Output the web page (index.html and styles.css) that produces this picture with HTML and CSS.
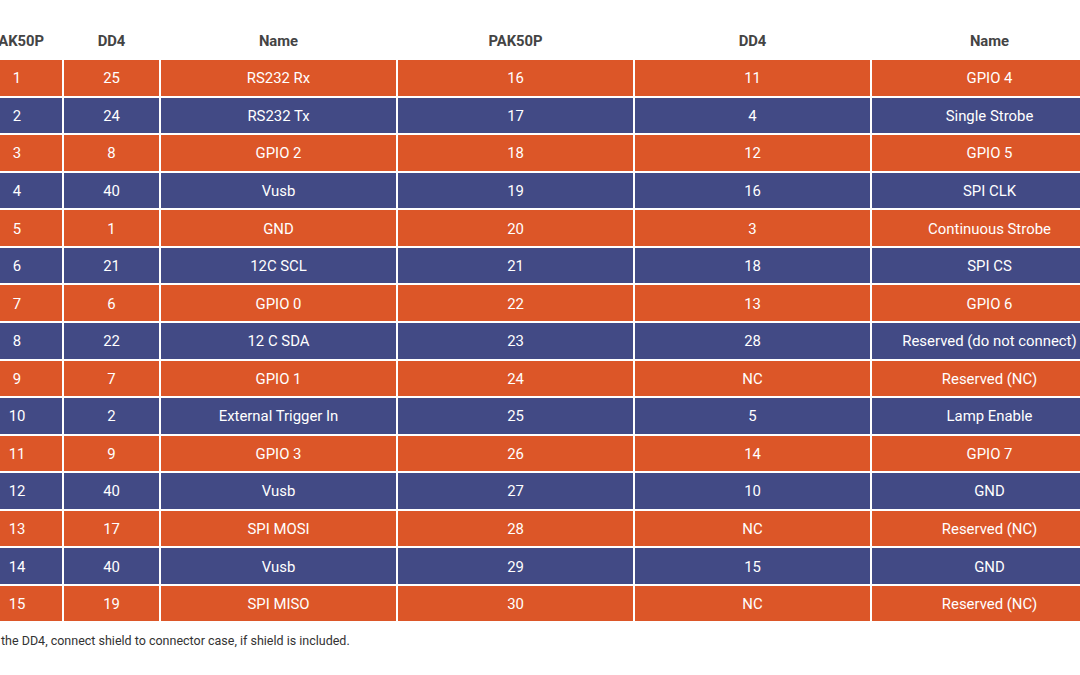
FILE: index.html
```html
<!DOCTYPE html>
<html>
<head>
<meta charset="utf-8">
<link rel="stylesheet" href="styles.css">
</head>
<body>
<div class="page">
  <div class="pins">
    <div class="hd">PAK50P</div><div class="hd">DD4</div><div class="hd">Name</div><div class="hd">PAK50P</div><div class="hd">DD4</div><div class="hd">Name</div>

    <div class="c o">1</div><div class="c o">25</div><div class="c o">RS232 Rx</div><div class="c o">16</div><div class="c o">11</div><div class="c o">GPIO 4</div>
    <div class="c b">2</div><div class="c b">24</div><div class="c b">RS232 Tx</div><div class="c b">17</div><div class="c b">4</div><div class="c b">Single Strobe</div>
    <div class="c o">3</div><div class="c o">8</div><div class="c o">GPIO 2</div><div class="c o">18</div><div class="c o">12</div><div class="c o">GPIO 5</div>
    <div class="c b">4</div><div class="c b">40</div><div class="c b">Vusb</div><div class="c b">19</div><div class="c b">16</div><div class="c b">SPI CLK</div>
    <div class="c o">5</div><div class="c o">1</div><div class="c o">GND</div><div class="c o">20</div><div class="c o">3</div><div class="c o">Continuous Strobe</div>
    <div class="c b">6</div><div class="c b">21</div><div class="c b">12C SCL</div><div class="c b">21</div><div class="c b">18</div><div class="c b">SPI CS</div>
    <div class="c o">7</div><div class="c o">6</div><div class="c o">GPIO 0</div><div class="c o">22</div><div class="c o">13</div><div class="c o">GPIO 6</div>
    <div class="c b">8</div><div class="c b">22</div><div class="c b">12 C SDA</div><div class="c b">23</div><div class="c b">28</div><div class="c b">Reserved (do not connect)</div>
    <div class="c o">9</div><div class="c o">7</div><div class="c o">GPIO 1</div><div class="c o">24</div><div class="c o">NC</div><div class="c o">Reserved (NC)</div>
    <div class="c b">10</div><div class="c b">2</div><div class="c b">External Trigger In</div><div class="c b">25</div><div class="c b">5</div><div class="c b">Lamp Enable</div>
    <div class="c o">11</div><div class="c o">9</div><div class="c o">GPIO 3</div><div class="c o">26</div><div class="c o">14</div><div class="c o">GPIO 7</div>
    <div class="c b">12</div><div class="c b">40</div><div class="c b">Vusb</div><div class="c b">27</div><div class="c b">10</div><div class="c b">GND</div>
    <div class="c o">13</div><div class="c o">17</div><div class="c o">SPI MOSI</div><div class="c o">28</div><div class="c o">NC</div><div class="c o">Reserved (NC)</div>
    <div class="c b">14</div><div class="c b">40</div><div class="c b">Vusb</div><div class="c b">29</div><div class="c b">15</div><div class="c b">GND</div>
    <div class="c o">15</div><div class="c o">19</div><div class="c o">SPI MISO</div><div class="c o">30</div><div class="c o">NC</div><div class="c o">Reserved (NC)</div>
  </div>
  <p class="note">the DD4, connect shield to connector case, if shield is included.</p>
</div>
</body>
</html>
```

FILE: styles.css
```css
html, body {
  margin: 0;
  padding: 0;
  background: #ffffff;
  overflow: hidden;
}
body {
  width: 1080px;
  height: 675px;
  font-family: Roboto, "Liberation Sans", sans-serif;
}
.page {
  padding-top: 23px;
}
.pins {
  display: grid;
  grid-template-columns: 90px 95px 235px 235px 235px 235px;
  grid-template-rows: 35px;
  grid-auto-rows: 35.57px;
  column-gap: 2px;
  row-gap: 2px;
  margin-left: -28px;
  width: 1137px;
}
.hd {
  display: flex;
  align-items: center;
  justify-content: center;
  font-weight: 700;
  font-size: 14.8px;
  color: #444444;
}
.c {
  display: flex;
  align-items: center;
  justify-content: center;
  font-size: 14.9px;
  color: #ffffff;
  white-space: nowrap;
  padding-top: 1px;
  box-sizing: border-box;
}
.o { background: #dc5628; }
.b { background: #424a85; }
.note {
  margin: 12px 0 0 1px;
  font-size: 12.5px;
  color: #333333;
  line-height: 15px;
}
```
